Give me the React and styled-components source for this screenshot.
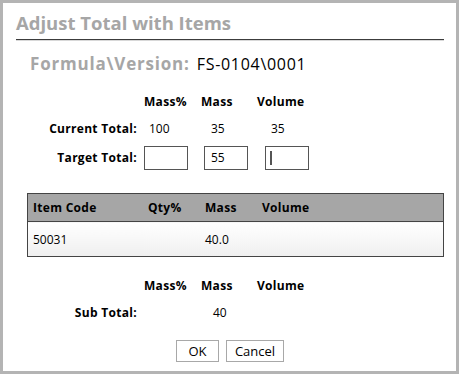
import React from "react";
import { styled, createGlobalStyle } from "styled-components";

const GlobalStyle = createGlobalStyle`
  html, body {
    margin: 0;
    padding: 0;
    background: #ffffff;
  }
  body {
    font-family: "Open Sans", "Liberation Sans", sans-serif;
    color: #000;
  }
`;

const Dialog = styled.div`
  box-sizing: border-box;
  width: 459px;
  height: 374px;
  border: 3px solid #b4b4b4;
  padding: 0 12px 0 13px;
  background: #fff;
`;

const Title = styled.h1`
  margin: 0;
  padding-top: 7px;
  height: 29px;
  font-size: 18.5px;
  font-weight: 700;
  line-height: 26px;
  color: #a6a6a6;
  border-bottom: 1px solid #3c3c3c;
  box-shadow: 0 1px 0 #d8d8d8;
`;

const FormulaRow = styled.div`
  display: flex;
  align-items: baseline;
  gap: 7px;
  margin: 12px 0 0 14px;
  height: 24px;
`;

const FormulaLabel = styled.span`
  font-size: 17px;
  font-weight: 700;
  letter-spacing: 0.8px;
  color: #a6a6a6;
`;

const FormulaValue = styled.span`
  font-size: 16px;
  letter-spacing: 0.7px;
  color: #000;
`;

const TotalsGrid = styled.div`
  display: grid;
  grid-template-columns: 128px 57px 56px 60px;
  grid-template-rows: ${(p) => p.$rows};
  align-items: center;
  margin-top: ${(p) => p.$top || 0}px;
  font-size: 12px;
`;

const ColHead = styled.div`
  font-weight: 700;
  font-size: 12px;
  letter-spacing: 0.3px;
`;

const RowLabel = styled.div`
  font-weight: 700;
  text-align: right;
  letter-spacing: 0.3px;
  padding-right: 7px;
`;

const Cell = styled.div`
  padding-left: ${(p) => p.$pad || 0}px;
`;

const NumInput = styled.input`
  box-sizing: border-box;
  width: 44px;
  height: 24px;
  margin-left: ${(p) => p.$pad || 0}px;
  border: 1px solid #555;
  padding: 0 6px;
  font-family: inherit;
  font-size: 12px;
  outline: none;
`;

const Caret = styled.span`
  display: inline-block;
  width: 2px;
  height: 14px;
  background: #555;
`;

const FakeInput = styled.div`
  box-sizing: border-box;
  width: 44px;
  height: 24px;
  margin-left: ${(p) => p.$pad || 0}px;
  border: 1px solid #555;
  padding: 0 4px;
  display: flex;
  align-items: center;
`;

const ItemsTable = styled.table`
  width: 417px;
  margin: 20px 0 0 11px;
  border-collapse: collapse;
  border: 1px solid #444;
  font-size: 12px;

  th {
    background: #a6a6a6;
    height: 27px;
    text-align: left;
    font-weight: 700;
    font-size: 12px;
    letter-spacing: 0.3px;
    padding: 0 0 0 5px;
    border-bottom: 1px solid #444;
  }
  td {
    height: 34px;
    padding: 0 0 0 5px;
    background: linear-gradient(#ffffff, #efefef);
  }
`;

const ButtonRow = styled.div`
  display: flex;
  justify-content: center;
  gap: 7px;
  margin-top: 14px;
`;

const Button = styled.button`
  box-sizing: border-box;
  height: 22px;
  min-width: ${(p) => p.$w || 44}px;
  border: 1px solid #a8a8a8;
  background: #fff;
  font-family: inherit;
  font-size: 13px;
  padding: 0 6px;
`;

const App = () => {
  return (
    <>
      <GlobalStyle />
      <Dialog>
        <Title>Adjust Total with Items</Title>

        <FormulaRow>
          <FormulaLabel>Formula\Version:</FormulaLabel>
          <FormulaValue>FS-0104\0001</FormulaValue>
        </FormulaRow>

        <TotalsGrid $top={11} $rows="28px 27px 31px">
          <div />
          <ColHead>Mass%</ColHead>
          <ColHead>Mass</ColHead>
          <ColHead>Volume</ColHead>

          <RowLabel>Current Total:</RowLabel>
          <Cell $pad={5}>100</Cell>
          <Cell $pad={10}>35</Cell>
          <Cell $pad={14}>35</Cell>

          <RowLabel>Target Total:</RowLabel>
          <Cell>
            <NumInput defaultValue="" />
          </Cell>
          <Cell>
            <NumInput $pad={3} defaultValue="55" />
          </Cell>
          <Cell>
            <FakeInput $pad={8}>
              <Caret />
            </FakeInput>
          </Cell>
        </TotalsGrid>

        <ItemsTable>
          <thead>
            <tr>
              <th style={{ width: 110 }}>Item Code</th>
              <th style={{ width: 52 }}>Qty%</th>
              <th style={{ width: 52 }}>Mass</th>
              <th>Volume</th>
            </tr>
          </thead>
          <tbody>
            <tr>
              <td>50031</td>
              <td></td>
              <td>40.0</td>
              <td></td>
            </tr>
          </tbody>
        </ItemsTable>

        <TotalsGrid $top={14} $rows="28px 27px">
          <div />
          <ColHead>Mass%</ColHead>
          <ColHead>Mass</ColHead>
          <ColHead>Volume</ColHead>

          <RowLabel>Sub Total:</RowLabel>
          <Cell />
          <Cell $pad={12}>40</Cell>
          <Cell />
        </TotalsGrid>

        <ButtonRow>
          <Button $w={43}>OK</Button>
          <Button $w={58}>Cancel</Button>
        </ButtonRow>
      </Dialog>
    </>
  );
};

export default App;
